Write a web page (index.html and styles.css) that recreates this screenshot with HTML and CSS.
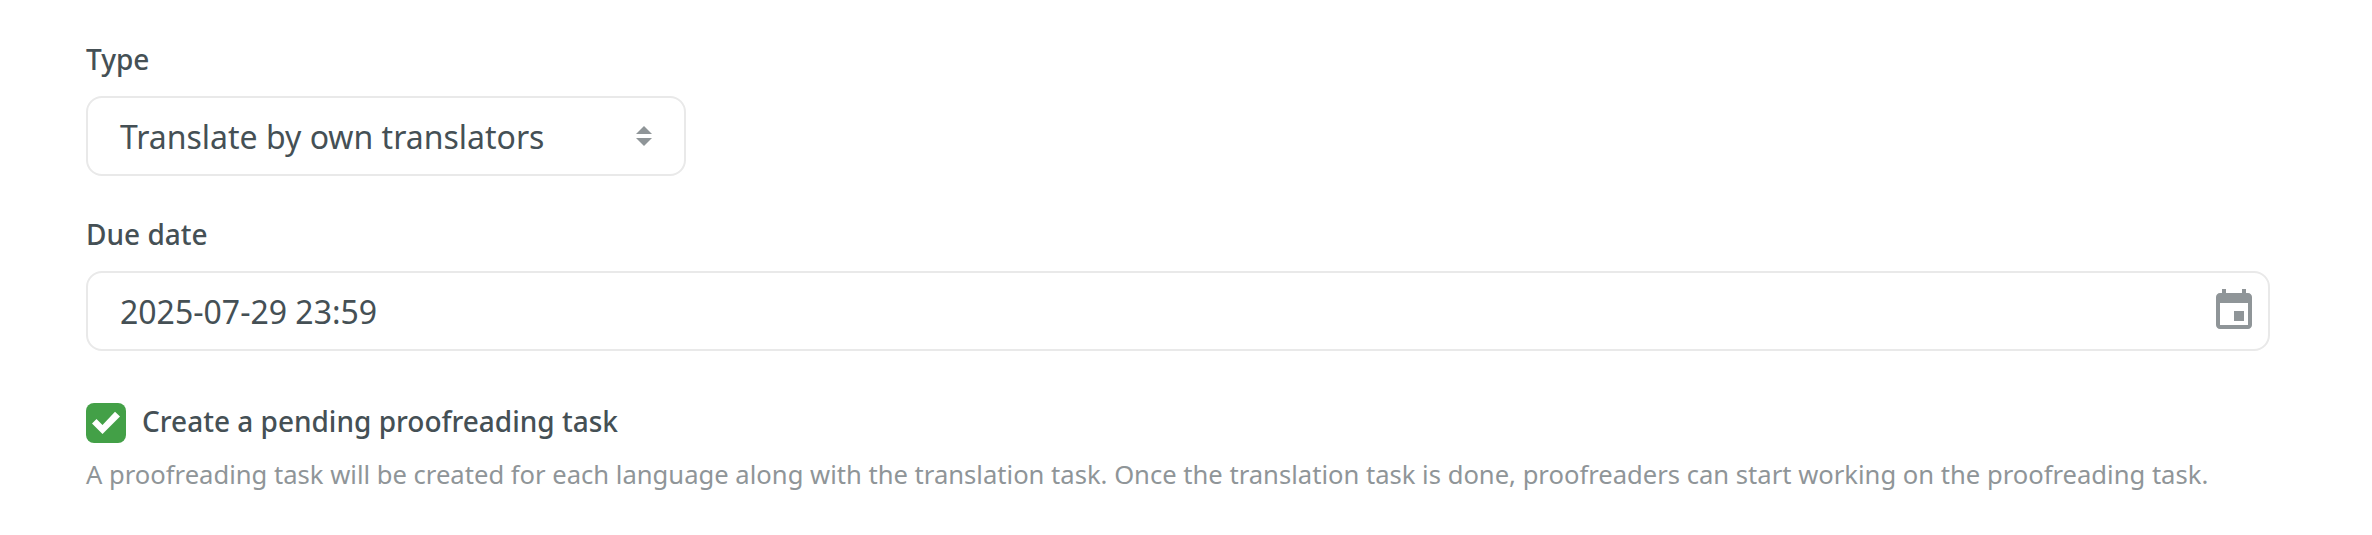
FILE: index.html
```html
<!DOCTYPE html>
<html lang="en">
<head>
<meta charset="utf-8">
<title>Create task</title>
<link rel="stylesheet" href="styles.css">
</head>
<body>
<form class="task-form">
  <div class="field">
    <div class="label">Type</div>
    <div class="control select">
      <span class="value">Translate by own translators</span>
      <svg class="sort" width="16" height="20" viewBox="0 0 16 20"><path d="M8 0l8 8H0zM8 20l8-8H0z"/></svg>
    </div>
  </div>
  <div class="field">
    <div class="label">Due date</div>
    <div class="control date">
      <span class="value">2025-07-29 23:59</span>
      <svg class="calendar" width="36" height="40" viewBox="0 0 18 20"><path d="M14 11H9v5h5v-5zM13 0v2H5V0H3v2H2C.9 2 0 2.900 0 4v14c0 1.100.9 2 2 2h14c1.100 0 2-.9 2-2V4c0-1.100-.9-2-2-2h-1V0h-2zm3 18H2V7h14v11z"/></svg>
    </div>
  </div>
  <div class="check-row">
    <svg class="checkbox" width="40" height="40" viewBox="0 0 40 40"><rect width="40" height="40" rx="8" fill="#43a047"/><path d="M6 20.500L10.500 16l6 6L29 8.700l5 4.800L16.500 31z" fill="#fff"/></svg>
    <span class="check-label">Create a pending proofreading task</span>
  </div>
  <p class="hint">A proofreading task will be created for each language along with the translation task. Once the translation task is done, proofreaders can start working on the proofreading task.</p>
</form>
</body>
</html>
```
FILE: styles.css
```css
* { box-sizing: border-box; }
body { margin: 0; background: #fff; color: #455055; font-family: "Noto Sans", sans-serif; }
.task-form { padding: 39px 102px 0 86px; }
.field { margin-bottom: 38px; }
.label { height: 40px; margin-bottom: 17px; font-size: 28px; font-weight: 500; line-height: 40px; }
.control { display: flex; align-items: center; justify-content: space-between; height: 80px; border: 2px solid #e9e9e9; border-radius: 16px; padding: 0 32px; font-size: 32px; white-space: nowrap; }
.value { padding-top: 2px; line-height: 44px; }
.sort, .calendar { fill: #8f9598; }
.select { width: 600px; }
.date { padding-right: 16px; }
.calendar { margin-bottom: 4px; }
.check-row { display: flex; align-items: center; gap: 16px; height: 40px; margin-top: 52px; }
.check-label { padding-bottom: 4px; font-size: 28px; font-weight: 500; line-height: 38px; }
.hint { margin: 12px 0 0; color: #8f9598; font-size: 25.6px; line-height: 39px; white-space: nowrap; }
```
